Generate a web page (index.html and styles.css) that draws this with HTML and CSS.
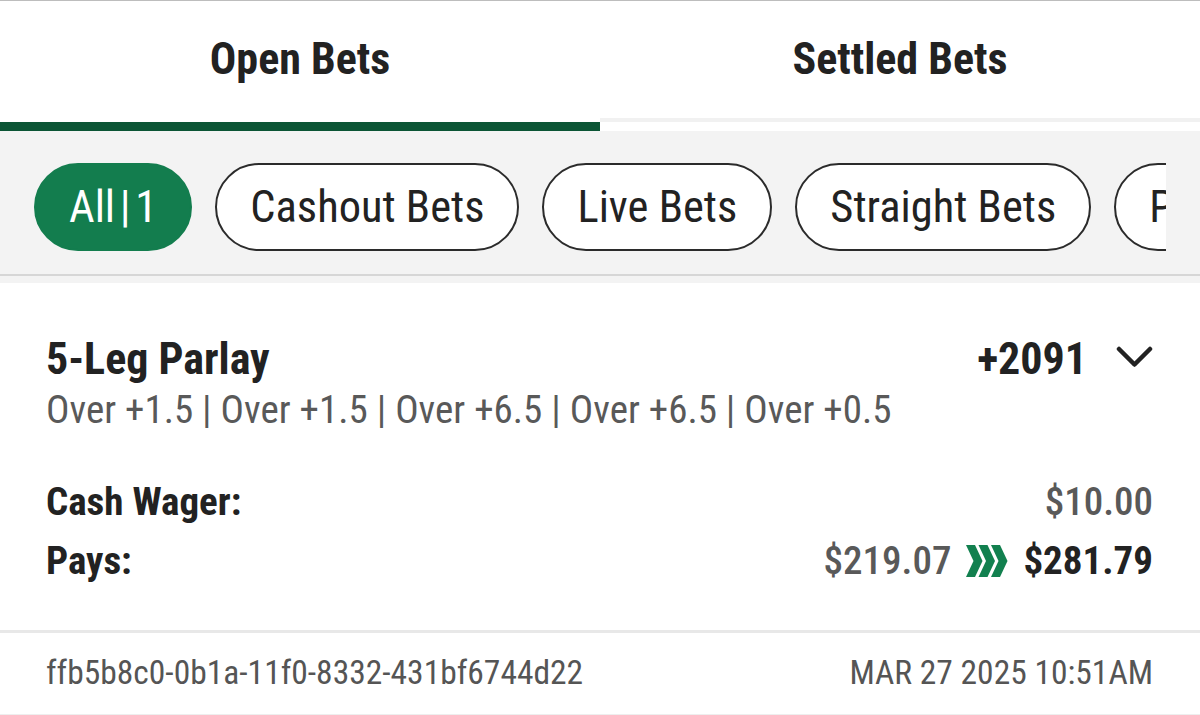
FILE: index.html
```html
<!DOCTYPE html>
<html lang="en">
<head>
    <meta charset="UTF-8">
    <meta name="viewport" content="width=device-width, initial-scale=1.0">
    <title>My Bets</title>
    <link rel="stylesheet" href="styles.css">
</head>
<body>
    <div class="tabs">
        <div class="tab active">Open Bets</div>
        <div class="tab">Settled Bets</div>
    </div>

    <div class="filters">
        <div class="pill-row">
            <span class="pill selected">All&#8202;|&#8202;1</span>
            <span class="pill">Cashout Bets</span>
            <span class="pill">Live Bets</span>
            <span class="pill">Straight Bets</span>
            <span class="pill">Parlay Bets</span>
        </div>
    </div>

    <div class="bet-card">
        <div class="bet-head">
            <h2 class="bet-title">5-Leg Parlay</h2>
            <div class="bet-odds">
                <span>+2091</span>
                <svg class="toggle" width="37" height="22" viewBox="0 0 37 22">
                    <path d="M3 3 L18.5 18.5 L34 3" fill="none" stroke="#222" stroke-width="4.5" stroke-linecap="round" stroke-linejoin="round"/>
                </svg>
            </div>
        </div>
        <p class="legs">Over +1.5 | Over +1.5 | Over +6.5 | Over +6.5 | Over +0.5</p>

        <div class="line">
            <span class="label">Cash Wager:</span>
            <span class="amount">$10.00</span>
        </div>
        <div class="line">
            <span class="label">Pays:</span>
            <span class="amount">
                $219.07
                <svg class="boost" width="42" height="32" viewBox="0 0 42 32">
                    <path d="M0 0 H9 L16.5 16 L9 32 H0 L7.5 16 Z" fill="#12804f"/>
                    <path d="M12.5 0 H21.5 L29 16 L21.5 32 H12.5 L20 16 Z" fill="#12804f"/>
                    <path d="M25 0 H34 L41.5 16 L34 32 H25 L32.5 16 Z" fill="#12804f"/>
                </svg>
                <b>$281.79</b>
            </span>
        </div>
    </div>

    <div class="bet-foot">
        <span>ffb5b8c0-0b1a-11f0-8332-431bf6744d22</span>
        <span>MAR 27 2025 10:51AM</span>
    </div>
</body>
</html>
```

FILE: styles.css
```css
body {
    margin: 0;
    padding: 0;
    background: #fff;
    font-family: "Roboto Condensed", Roboto, "Liberation Sans", sans-serif;
    font-stretch: condensed;
    color: #222;
    overflow: hidden;
}

/* top tabs */
.tabs {
    display: grid;
    grid-template-columns: 1fr 1fr;
    border-top: 1px solid #bdbdbd;
}
.tab {
    height: 115px;
    padding-bottom: 6px;
    display: flex;
    align-items: center;
    justify-content: center;
    font-size: 44px;
    font-weight: 700;
    border-bottom: 9px solid #fff;
    box-shadow: inset 0 -4px 0 #f1f1f1;
}
.tab.active {
    border-bottom-color: #0b5535;
    box-shadow: none;
}

/* filter chips */
.filters {
    background: #f3f3f3;
    padding: 32px 34px 0 34px;
    height: 111px;
    border-bottom: 2px solid #d6d6d6;
}
.pill-row {
    display: flex;
    gap: 23px;
    overflow: hidden;
}
.pill {
    flex-shrink: 0;
    height: 84px;
    display: flex;
    align-items: center;
    padding: 0 33px;
    border: 2px solid #2b2b2b;
    border-radius: 44px;
    background: #fff;
    font-size: 44.5px;
    color: #222;
}
.pill.selected {
    background: #137d4e;
    border-color: #137d4e;
    color: #fff;
}

/* bet card */
.bet-card {
    border-top: 7px solid #f3f3f3;
    padding: 50px 47px 40px 46px;
    border-bottom: 3px solid #e8e8e8;
}
.bet-head {
    display: flex;
    justify-content: space-between;
    align-items: center;
    height: 52px;
}
.bet-title {
    margin: 0;
    font-size: 44px;
    line-height: 52px;
    font-weight: 700;
}
.bet-odds {
    display: flex;
    align-items: center;
    gap: 29px;
    font-size: 44px;
    line-height: 52px;
    font-weight: 700;
}
.toggle {
    margin-top: -5px;
}
.legs {
    margin: 2px 0 40px 0;
    font-size: 39px;
    line-height: 46px;
    color: #595959;
}
.line {
    display: flex;
    justify-content: space-between;
    align-items: center;
    height: 58px;
    font-size: 39px;
}
.line + .line {
    margin-top: 1px;
}
.label {
    font-weight: 700;
}
.amount {
    display: flex;
    align-items: center;
    gap: 15px;
    color: #595959;
    font-weight: 500;
}
.amount b {
    color: #222;
    font-weight: 700;
}

/* bet id + timestamp */
.bet-foot {
    display: flex;
    justify-content: space-between;
    padding: 20px 47px 21px 46px;
    line-height: 40px;
    font-size: 33.5px;
    color: #555;
    border-bottom: 1px solid #eee;
}
```
